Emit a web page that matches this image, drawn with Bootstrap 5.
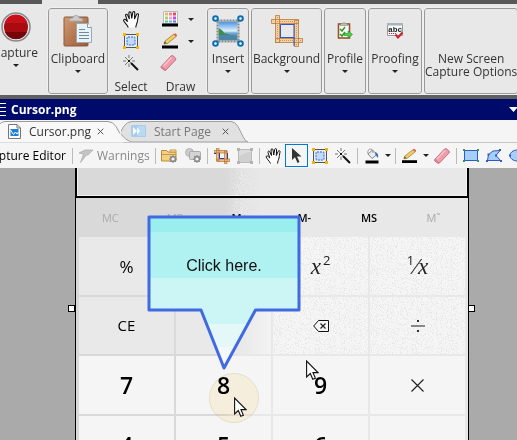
<!DOCTYPE html>
<html lang="en">
<head>
<meta charset="utf-8">
<meta name="viewport" content="width=device-width, initial-scale=1">
<title>Cursor.png - Capture Editor</title>
<link href="https://cdn.jsdelivr.net/npm/bootstrap@5.3.0/dist/css/bootstrap.min.css" rel="stylesheet">
<style>
body{font-family:"Open Sans","Noto Sans",sans-serif;font-size:12px;line-height:13px;color:#333;background:#aaa;height:100vh}
button{font:inherit;color:inherit;background:none;border:0;padding:0}
svg{display:block;flex:none}
.ribbon{background:#e8e8e8;border-top:4px solid #585858;border-bottom:4px solid #606060;height:99px;padding:4px 0 1px}
.ribbon-top{top:-4px;height:4px;left:42px;width:56px;background:#e8e8e8}
.rb{white-space:nowrap;flex:none;font-size:12px}
.rb-box{border:1px solid #999;border-radius:3px;outline:1px solid #f0f0f0}
.rb-icon{height:43px}
.rb-icon-cap{height:38px}
.rb .caret{margin-top:5px}
.rule{width:1px;background:#c4c4c4;margin:5px 2px 5px 0}
.w-cap{width:31px;margin-right:15px}
.w-clip{width:60px}.w-sel{width:42px}.w-draw{width:53px}.w-ins{width:42px}
.w-bg{width:71px}.w-prof{width:42px}.w-proof{width:54px}
.w-new{flex:1 0 93px}
.rb-group{gap:2px}
.tool-row{height:22px}
.tool-name{margin-top:6px}
.caret{width:0;height:0;border:3px solid transparent;border-top-color:#222;border-bottom:0}
.titlebar{background:#000a6b;color:#fff;height:21px;font-weight:700}
.tabs{height:23px;background:#f5f5f5;border-bottom:1px solid #c3c5c8}
.tab{height:22px}
.tab-a{width:121px;padding-left:8px;z-index:2}
.tab-b{width:127px;padding-left:10px;color:#777;z-index:1}
.tab-shape{left:0;top:0;z-index:-1}
.tab-name{width:68px}
.toolbar{background:#f5f5f5;height:25px}
.tb{width:23px;height:23px}
.tb.picked{border:1px solid #0078d7}
.tb-rule{width:1px;height:16px;background:#bbb;margin:0 2px 0 3px;flex:none}
.tb-drop{width:9px;height:23px}
.tb-label{width:69px;color:#000;padding-right:3px}
.tb-warn{width:77px;color:#888}
.stage{background:#aaa;padding:0 48px 0 75px;min-height:0}
.calc{border:solid #000;border-width:0 1px;background:linear-gradient(90deg,#d9d9d9 38%,#e8e8e8 42%)}
.readout{height:30px;border:solid #000;border-width:0 1px 2px}
.readout-in{border:solid #f0f0f0;border-width:0 1px 1px}
.mem{grid-template-columns:repeat(6,1fr);height:39px;padding:0 2px;font-size:11px;font-weight:600;color:#000}
.mem button:disabled{color:#aaa;font-weight:400}
.keys{grid-template-columns:repeat(4,1fr);grid-template-rows:58px 57px 58px 58px;gap:2px;padding:0 3px}
.key{background:#f5f5f5;color:#000;position:relative}
.key.dim{background:#e9e9e9}
.key.fade-cell{background:linear-gradient(90deg,#e9e9e9 70%,#f3f3f3)}
.fn{font-size:15px}
.pct{font-size:17px}
.digit{font-size:23px;font-weight:600}
.math{font-family:"Liberation Serif",serif;font-style:italic;font-size:23px;color:#222}
.math sup{font-family:"Open Sans",sans-serif;font-style:normal;font-size:13px;top:-9px;margin-left:2px}
.grain{inset:0;width:100%;height:100%}
.grain-top{left:0;top:0;width:100%;height:188px}
.callout{left:70px;top:46px;width:156px;height:160px}
.callout p{font-family:"Liberation Sans",Arial,sans-serif;font-size:16px;line-height:20px;color:#111;padding-top:42px}
.halo{left:133px;top:205px;mix-blend-mode:multiply}
.ptr-a{left:158px;top:229px}
.ptr-b{left:230px;top:192px}
.grip{width:7px;height:7px;border:1px solid #000;background:#fff;top:137px}
.grip-l{left:-8px}.grip-r{right:-7px}
</style>
<script src="https://cdn.jsdelivr.net/npm/bootstrap@5.3.0/dist/js/bootstrap.bundle.min.js"></script>
</head>
<body class="d-flex flex-column overflow-hidden">

<svg width="0" height="0" class="position-absolute" aria-hidden="true">
  <defs>
    <symbol id="hand" viewBox="0 0 16 16"><path d="M5 15.500C4 13 1 10.500 .6 9c-.2-1.200 1.200-1.500 2-.6L4.300 10 2.500 4.500c-.4-1.500 1.200-2 1.800-.6L6 7.500 5.500 2c0-1.600 1.900-1.600 2.100 0L8.200 7l1-5.500c.3-1.500 2-1.200 1.900.3L10.800 7.500l1.900-4.200c.7-1.300 2.200-.6 1.800.8C13.800 7 14 8 13.500 10c-.4 1.800-1.200 3-1.500 5.500" fill="#fff" stroke="#111"/></symbol>
    <symbol id="pick" viewBox="0 0 16 16"><rect x="1.500" y="1.500" width="13" height="13" fill="#dff2f5" stroke="#555"/><rect x="4" y="4" width="8" height="8" rx="1" fill="#c4d9fa" stroke="#3c5fd0" stroke-dasharray="2 1"/><path d="M0 0h3v3H0zM13 0h3v3h-3zM0 13h3v3H0zM13 13h3v3h-3z" fill="#f9b208"/></symbol>
    <symbol id="wand" viewBox="0 0 16 16"><path d="M6 0v3M6 8.500V12M0 6h3M9 6h3M2 2l2 2M10 2 8 4M2 10l2-2" stroke="#777"/><path d="m4.500 4.500 3 3m0-3-3 3" stroke="#111"/><path d="m8 8 7 7" stroke="#111" stroke-width="2"/></symbol>
    <symbol id="pencil" viewBox="0 0 16 16"><path d="M0 12.500h16v3H0z" fill="#000"/><path d="m2 11 1-3 9-7 2.500 2.200L5.500 10.500z" fill="#f0d060" stroke="#9b7a2c" stroke-width=".8"/><path d="m2 11 1-2.500 1.500 1.600z" fill="#444"/><path d="m11.500 1.500 1.700-1.300 2 1.800-1.500 1.500z" fill="#e45a5a"/></symbol>
    <symbol id="eraser" viewBox="0 0 16 16"><path d="M.7 11.500 10.500 1Q11.500.2 12.700 1L15 3q.8 1 0 2L5.500 15q-1 .8-2 0L.8 13q-.6-.8-.1-1.500z" fill="#f19bab" stroke="#b96b7b" stroke-width=".9"/><path d="m1 11.500 4 3.500" stroke="#cf7485"/><path d="m3 11 8-8.500" stroke="#f9c3cd" stroke-width="1.500"/></symbol>
    <symbol id="crop" viewBox="0 0 32 32"><path d="M.5 4.500h27v4H.5zM4.500 23.500h27v4h-27zM23.500 5.500h4v26h-4zM4.500.5h4v27h-4z" fill="#f5cf9c" stroke="#b87a3d" stroke-width=".8"/><path d="M6.500 2v24M25.500 7v23M9 6.500h14M9 25.500h21" stroke="#c49a67" stroke-dasharray="1 1"/><path d="M9.500 23V9.500H23M9 22.500h14M23 9v22" fill="none" stroke="#3554c8"/></symbol>
    <symbol id="crop-s" viewBox="0 0 16 16"><path d="M0 2.500h13v2.500H0zM3 11h13v2.500H3zM10.500 3H13v12.500h-2.500zM2.500 0H5v13H2.500z" fill="#f3bd7c" stroke="#a9642c" stroke-width=".6"/><path d="M5.500 5v5.500H10M13.500 5v6M0 5.500h2" fill="none" stroke="#263cc0"/></symbol>
    <symbol id="ptr" viewBox="0 0 13 20"><path d="M.6 1v16l3.700-3.500 2.500 5.800 2.600-1.100L7 12.600h5z" fill="#fff" stroke="#111" stroke-width="1.100"/></symbol>
    <symbol id="gear" viewBox="0 0 8 8"><circle cx="4" cy="4" r="2.500" fill="#eee" stroke="#888" stroke-width="1.200"/><path d="M4 0v8M0 4h8M1.200 1.200l5.600 5.600M6.800 1.200 1.200 6.800" stroke="#888" stroke-width="1.100"/><circle cx="4" cy="4" r="1.500" fill="#f5f5f5"/></symbol>
    <filter id="speck" x="0" y="0" width="100%" height="100%" color-interpolation-filters="sRGB">
      <feTurbulence type="fractalNoise" baseFrequency=".8" numOctaves="2" seed="4"/>
      <feColorMatrix values="0 0 0 0 .91  0 0 0 0 .91  0 0 0 0 .91  14 0 0 0 -7.800"/>
    </filter>
    <filter id="speck-dark" x="0" y="0" width="100%" height="100%" color-interpolation-filters="sRGB">
      <feTurbulence type="fractalNoise" baseFrequency=".8" numOctaves="2" seed="9"/>
      <feColorMatrix values="0 0 0 0 .85  0 0 0 0 .85  0 0 0 0 .85  14 0 0 0 -7"/>
    </filter>
  </defs>
</svg>

<header class="ribbon d-flex position-relative flex-shrink-0">
  <div class="ribbon-top position-absolute"></div>
  <button class="rb w-cap d-flex flex-column align-items-center">
    <span class="rb-icon-cap d-flex align-items-center"><svg width="30" height="30" viewBox="0 0 30 30"><circle cx="15" cy="15" r="14" fill="#e6ebf4" stroke="#888" stroke-width="1.500"/><circle cx="15" cy="15" r="12" fill="#a80c10"/><path d="M3.500 11a12 12 0 0 1 23 0z" fill="#c8101a"/><path d="M4 20a12 12 0 0 0 22 0z" fill="#760407"/></svg></span>
    <span>Capture</span><i class="caret"></i>
  </button>
  <div class="rule"></div>
  <button class="rb rb-box w-clip d-flex flex-column align-items-center">
    <span class="rb-icon d-flex align-items-center"><svg width="30" height="32" viewBox="0 0 30 32"><defs><linearGradient id="board" x2="1" y2="1"><stop stop-color="#d39a72"/><stop offset="1" stop-color="#9a5a35"/></linearGradient></defs><rect x="1" y="2" width="24" height="29" rx="1" fill="url(#board)" stroke="#8a5b40"/><path d="M6 6q0-3 4-3 0-2.500 3-2.500T16 3q4 0 4 3z" fill="#c8ccd0" stroke="#aaa"/><path d="M13.500 8.500h11l4 4v15h-15z" fill="#e6f4f8" stroke="#9ab"/><path d="M24.500 8.500v4h4" fill="#fff" stroke="#89a"/><path d="M16 14.500h6M16 17.500h10M16 20.500h10M16 23.500h10" stroke="#789"/></svg></span>
    <span>Clipboard</span><i class="caret"></i>
  </button>
  <div class="rb w-sel text-center ps-1">
    <button class="tool-row d-flex w-100 align-items-center justify-content-center" aria-label="Pan"><svg width="17" height="17"><use href="#hand"/></svg></button>
    <button class="tool-row d-flex w-100 align-items-center justify-content-center" aria-label="Select area"><svg width="16" height="16"><use href="#pick"/></svg></button>
    <button class="tool-row d-flex w-100 align-items-center justify-content-center" aria-label="Magic wand"><svg width="16" height="16"><use href="#wand"/></svg></button>
    <div class="tool-name">Select</div>
  </div>
  <div class="rule"></div>
  <div class="rb w-draw text-center">
    <button class="tool-row d-flex w-100 align-items-center" aria-label="Color"><svg class="ms-2 me-2" width="20" height="16" viewBox="0 0 20 16"><path d="M3.500.5h14v12h-14z" fill="#fff" stroke="#bbb"/><path d="M5 1.500h3v3H5z" fill="#e7b865"/><path d="M9 1.500h3v3H9z" fill="#f08a8a"/><path d="M13 1.500h3v3h-3z" fill="#f04070"/><path d="M5 5.500h3v3H5z" fill="#a3d65c"/><path d="M9 5.500h3v3H9z" fill="#f4a0d0"/><path d="M13 5.500h3v3h-3z" fill="#c050e0"/><path d="M5 9.500h3v2H5z" fill="#50c8a8"/><path d="M9 9.500h3v2H9z" fill="#60b0f0"/><path d="M13 9.500h3v2h-3z" fill="#6070e8"/><path d="M2 12.500h16v3H2z"/></svg><i class="caret mt-0"></i></button>
    <button class="tool-row d-flex w-100 align-items-center" aria-label="Pencil"><svg class="ms-2 me-2" width="20" height="16"><use href="#pencil" x="2" width="16" height="16"/></svg><i class="caret mt-0"></i></button>
    <button class="tool-row d-flex w-100 align-items-center" aria-label="Eraser"><svg class="ms-2" width="17" height="16"><use href="#eraser"/></svg></button>
    <div class="tool-name ps-1">Draw</div>
  </div>
  <div class="rule"></div>
  <div class="rb-group d-flex flex-grow-1">
  <button class="rb rb-box w-ins d-flex flex-column align-items-center">
    <span class="rb-icon d-flex align-items-center"><svg width="32" height="32" viewBox="0 0 32 32"><defs><linearGradient id="sea" x2="0" y2="1"><stop stop-color="#3c8ce0"/><stop offset=".5" stop-color="#e0f2fc"/><stop offset=".6" stop-color="#6fa8d0"/><stop offset="1" stop-color="#2b6a9c"/></linearGradient></defs><rect x="6" y="6" width="20" height="20" fill="url(#sea)"/><path d="M6 13q5 2 6 5l10 3H6z" fill="#3c8d4a"/><path d="M6 20q10-1 20 1v5H6z" fill="#4b86a8"/><rect x="5.500" y="5.500" width="21" height="21" fill="none" stroke="#e8e8e8" stroke-width="2"/><rect x="5.500" y="5.500" width="21" height="21" fill="none" stroke="#888" stroke-width="2" stroke-dasharray="2 1"/><g fill="#fff" stroke="#0a6fae" stroke-width="2"><circle cx="3.500" cy="3.500" r="2.300"/><circle cx="28.500" cy="3.500" r="2.300"/><circle cx="3.500" cy="28.500" r="2.300"/><circle cx="28.500" cy="28.500" r="2.300"/></g></svg></span>
    <span>Insert</span><i class="caret"></i>
  </button>
  <button class="rb rb-box w-bg d-flex flex-column align-items-center">
    <span class="rb-icon d-flex align-items-center"><svg width="32" height="32"><use href="#crop"/></svg></span>
    <span>Background</span><i class="caret"></i>
  </button>
  <button class="rb rb-box w-prof d-flex flex-column align-items-center">
    <span class="rb-icon d-flex align-items-center"><svg width="16" height="17" viewBox="0 0 16 17"><rect x="1.500" y="2" width="11" height="14" fill="#fff" stroke="#995128" stroke-width="1.600"/><path d="M3 3.500 4 1.500h2q1-2 2 0h2l1 2z" fill="#bbb" stroke="#888" stroke-width=".6"/><path d="m3 7 2 2 3-4M3 12l2 2 3-4" fill="none" stroke="#20a020" stroke-width="1.500"/><path d="M7 11.500h4V9l4.500 3.500L11 16v-2.500H7z" fill="#4fd04f" stroke="#168a16" stroke-width=".6"/></svg></span>
    <span>Profile</span><i class="caret"></i>
  </button>
  <button class="rb rb-box w-proof d-flex flex-column align-items-center">
    <span class="rb-icon d-flex align-items-center"><svg width="18" height="17" viewBox="0 0 18 17"><path d="M1.500 1.500h15v12h-15z" fill="#f4fafb" stroke="#999"/><path d="M1 1h16v2.500H1z" fill="#aab4b8"/><text x="2" y="9.500" font-family="Liberation Mono,monospace" font-weight="700" font-size="8" fill="#222">abc</text><path d="M3 11.500h8" stroke="#d22" stroke-dasharray="1 1"/><path d="m9.500 12.500 2.500 3 4.500-5" fill="none" stroke="#cf2430" stroke-width="2"/></svg></span>
    <span>Proofing</span><i class="caret"></i>
  </button>
  <button class="rb rb-box w-new d-flex flex-column align-items-center">
    <span class="rb-icon"></span>
    <span>New Screen</span>
    <span>Capture Options</span>
  </button>
  </div>
</header>

<div class="titlebar d-flex align-items-center flex-shrink-0">
  <svg width="11" height="15" viewBox="0 0 11 15"><path d="M0 1.500h6M0 5.500h6M0 9.500h6M0 13.500h6" stroke="#fff"/></svg>
  <span>Cursor.png</span>
  <svg class="ms-auto" width="8" height="5" viewBox="0 0 8 5"><path d="M0 0h9L4.500 5z" fill="#fff"/></svg>
</div>

<nav class="tabs d-flex flex-shrink-0" aria-label="Documents">
  <div class="tab tab-a d-flex align-items-center position-relative">
    <svg class="tab-shape position-absolute" width="130" height="23" viewBox="0 0 130 23"><path d="M-1 5Q1 1.500 5 1.500h103q5 0 8 5l4 7Q117 18 124 22.500H-1z" fill="#f8f8f8"/><path d="M-1 5Q1 1.500 5 1.500h103q5 0 8 5l4 7" fill="none" stroke="#999"/></svg>
    <svg width="13" height="15" viewBox="0 0 13 15"><path d="M.5.5h8.500l3.500 3.500v10.500H.5z" fill="#fff" stroke="#777"/><path d="M9 .5V4h3.500" fill="none" stroke="#777"/><path d="M2.500 5h8v7h-8z" fill="#1f7fd8"/><path d="m2.500 6 3 4.500 2-2.500 1.500 2 1.500-2" fill="none" stroke="#fff"/></svg>
    <a href="#" class="tab-name text-reset text-decoration-none ms-2 text-nowrap">Cursor.png</a>
    <button aria-label="Close Cursor.png"><svg width="7" height="7" viewBox="0 0 7 7"><path d="m.7.7 5.600 5.600m0-5.600L.7 6.300" stroke="#555"/></svg></button>
  </div>
  <div class="tab tab-b d-flex align-items-center position-relative">
    <svg class="tab-shape position-absolute" width="127" height="22" viewBox="0 0 127 22"><path d="M-1 13 3 6q3-4.500 8-4.500h99q4 0 7 5l5 10q2 5 5 5.500H10Q4 20-1 13z" fill="#e1e1e1" stroke="#a0a0a0"/></svg>
    <svg width="15" height="12" viewBox="0 0 15 12"><rect width="15" height="12" rx="1" fill="#a8cdea"/><path d="M7 1h7v10H7z" fill="#b9daf2"/><path d="m2 2 4 4-4 4zM6 2l3 4-3 4z" fill="#f5fbff"/></svg>
    <a href="#" class="tab-name text-reset text-decoration-none text-nowrap ms-2">Start Page</a>
    <button aria-label="Close Start Page"><svg width="7" height="7" viewBox="0 0 7 7"><path d="m.7.7 5.600 5.600m0-5.600L.7 6.300" stroke="#555"/></svg></button>
  </div>
</nav>

<div class="toolbar d-flex align-items-center flex-shrink-0" role="toolbar" aria-label="Editor tools">
  <div class="tb-label d-flex justify-content-end text-nowrap flex-shrink-0">Capture Editor</div>
  <i class="tb-rule"></i>
  <button class="tb-warn d-flex align-items-center flex-shrink-0"><svg class="me-1 ms-1" width="14" height="14" viewBox="0 0 14 14"><path d="M0 4 6 1h8L9 6H7.500L1.500 13.500 4.500 5z" fill="#c4c4c4" stroke="#aaa" stroke-width=".7"/></svg>Warnings</button>
  <i class="tb-rule"></i>
  <button class="tb d-flex align-items-center justify-content-center flex-shrink-0" aria-label="Folder options"><svg width="17" height="16" viewBox="0 0 17 16"><path d="M.5 2.500h5l1.500 1.500h8v9H.5z" fill="#f4cf80" stroke="#bc8a38"/><path d="M1 6.500h14M9 2h6v2H9z" stroke="#c59a4e" fill="#fae5b0"/><use href="#gear" x="8" y="7" width="8" height="8"/></svg></button>
  <button class="tb d-flex align-items-center justify-content-center flex-shrink-0" aria-label="Shape options"><svg width="16" height="16" viewBox="0 0 16 16"><circle cx="4.500" cy="4.500" r="4" fill="#ccc" stroke="#b5b5b5"/><rect x="4.500" y="3.500" width="11" height="8" rx="1" fill="#d3d3d3" stroke="#aaa"/><use href="#gear" x="8" y="7" width="8" height="8"/></svg></button>
  <i class="tb-rule"></i>
  <button class="tb d-flex align-items-center justify-content-center flex-shrink-0" aria-label="Crop"><svg width="16" height="16"><use href="#crop-s"/></svg></button>
  <button class="tb d-flex align-items-center justify-content-center flex-shrink-0" aria-label="Resize"><svg width="16" height="16" viewBox="0 0 16 16"><path d="M1.500 1.500h13v13h-13z" fill="#dcdcdc" stroke="#bbb"/><path d="M2 9q6-5 12-5v10H2z" fill="#d0d0d0"/><path d="M0 0h3v3H0zM13 0h3v3h-3zM0 13h3v3H0zM13 13h3v3h-3z" fill="#b4b4b4"/></svg></button>
  <i class="tb-rule"></i>
  <button class="tb d-flex align-items-center justify-content-center flex-shrink-0" aria-label="Pan"><svg width="17" height="16"><use href="#hand"/></svg></button>
  <button class="tb picked d-flex align-items-center justify-content-center flex-shrink-0" aria-label="Pointer" aria-pressed="true"><svg width="10" height="15" viewBox="0 0 10 15"><path d="M0 0v12l3-2.800L5.500 15l2-1L5 8.500h4.500z" fill="#333"/></svg></button>
  <button class="tb d-flex align-items-center justify-content-center flex-shrink-0" aria-label="Select area"><svg width="16" height="16"><use href="#pick"/></svg></button>
  <button class="tb d-flex align-items-center justify-content-center flex-shrink-0" aria-label="Magic wand"><svg width="16" height="16"><use href="#wand"/></svg></button>
  <i class="tb-rule"></i>
  <button class="tb d-flex align-items-center justify-content-center flex-shrink-0" aria-label="Fill"><svg width="14" height="16" viewBox="0 0 14 16"><path d="M.5 12.500h13v3H.5z"/><path d="m3 6 4.500-4L12 6.500 7 10.500z" fill="#e9edf0" stroke="#888"/><path d="M3 6q-1-5 3-5 2 0 2 4" fill="none" stroke="#999"/><path d="M10 4q4 1 3 6l-2.500-3z" fill="#3b6cb5"/></svg></button>
  <button class="tb-drop d-flex align-items-center justify-content-center flex-shrink-0" aria-label="Fill choices"><i class="caret"></i></button>
  <i class="tb-rule"></i>
  <button class="tb d-flex align-items-center justify-content-center flex-shrink-0" aria-label="Pencil"><svg width="15" height="16"><use href="#pencil"/></svg></button>
  <button class="tb-drop d-flex align-items-center justify-content-center flex-shrink-0" aria-label="Pencil choices"><i class="caret"></i></button>
  <button class="tb d-flex align-items-center justify-content-center flex-shrink-0" aria-label="Eraser"><svg width="16" height="16"><use href="#eraser"/></svg></button>
  <i class="tb-rule"></i>
  <button class="tb d-flex align-items-center justify-content-center flex-shrink-0" aria-label="Rectangle"><svg width="16" height="13" viewBox="0 0 16 13"><path d="M1.500 1.500h13v10h-13z" fill="#a4d0f8" stroke="#3157c8"/><path d="M0 0h2v2H0zM14 0h2v2h-2zM0 11h2v2H0zM14 11h2v2h-2z" fill="#2a9a50"/></svg></button>
  <button class="tb d-flex align-items-center justify-content-center flex-shrink-0" aria-label="Polygon"><svg width="16" height="13" viewBox="0 0 16 13"><path d="m1.500 11.500 1-6L7 2l7-.5-4 5 4.500 5z" fill="#a4d0f8" stroke="#3157c8"/><path d="M0 11h2v2H0zM13 0h2v2h-2zM14 11h2v2h-2zM1.500 4.500h2v2h-2zM9 5.500h2v2H9z" fill="#3157c8"/></svg></button>
  <button class="tb d-flex align-items-center justify-content-center flex-shrink-0" aria-label="Ellipse"><svg width="16" height="13" viewBox="0 0 16 13"><ellipse cx="8" cy="6.500" rx="7" ry="5.500" fill="#a4d0f8" stroke="#3157c8"/><path d="M0 5.500h2v2H0z" fill="#3157c8"/></svg></button>
</div>

<main class="stage d-flex flex-grow-1 overflow-hidden">
  <div class="calc flex-grow-1 position-relative">
    <svg class="grain-top position-absolute" aria-hidden="true"><defs><linearGradient id="band"><stop offset=".36" stop-color="#000"/><stop offset=".39" stop-color="#fff"/><stop offset=".4" stop-color="#fff"/><stop offset=".47" stop-color="#000"/></linearGradient><mask id="band-mask"><rect width="100%" height="100%" fill="url(#band)"/></mask></defs><rect width="100%" height="69" filter="url(#speck-dark)" mask="url(#band-mask)"/></svg>
    <div class="readout d-flex position-relative"><div class="readout-in flex-grow-1"></div></div>
    <div class="mem d-grid position-relative">
      <button disabled>MC</button><button disabled>MR</button><button>M+</button><button>M-</button><button>MS</button><button disabled>Mˇ</button>
    </div>
    <div class="keys d-grid">
      <button class="key dim pct">%</button>
      <button class="key dim" aria-label="Square root"></button>
      <button class="key math"><svg class="grain position-absolute" aria-hidden="true"><rect width="100%" height="100%" filter="url(#speck)"/></svg><span class="position-relative">x<sup>2</sup></span></button>
      <button class="key math"><svg class="grain position-absolute" aria-hidden="true"><rect width="100%" height="100%" filter="url(#speck)"/></svg><span class="position-relative"><sup class="ms-0">1</sup>⁄x</span></button>
      <button class="key dim fn">CE</button>
      <button class="key fade-cell" aria-label="Clear"></button>
      <button class="key d-flex align-items-center justify-content-center" aria-label="Backspace"><svg class="grain position-absolute" aria-hidden="true"><rect width="100%" height="100%" filter="url(#speck)"/></svg><svg class="position-relative" width="16" height="12" viewBox="0 0 16 12"><path d="M5.500.5h10v11h-10L.7 6z" fill="#f5f5f5" stroke="#111"/><path d="m7.500 3.500 5 5m0-5-5 5" stroke="#222" stroke-width="1.200"/></svg></button>
      <button class="key d-flex align-items-center justify-content-center" aria-label="Divide"><svg class="grain position-absolute" aria-hidden="true"><rect width="100%" height="100%" filter="url(#speck)"/></svg><svg class="position-relative" width="14" height="12" viewBox="0 0 14 12"><path d="M0 6h14" stroke="#888" stroke-width="2"/><path d="M6 0h2v2H6zM6 10h2v2H6z" fill="#333"/></svg></button>
      <button class="key digit">7</button>
      <button class="key digit">8</button>
      <button class="key digit">9</button>
      <button class="key d-flex align-items-center justify-content-center" aria-label="Multiply"><svg width="13" height="13" viewBox="0 0 13 13"><path d="m.5.5 12 12m0-12-12 12" stroke="#222" stroke-width="1.200"/></svg></button>
      <button class="key digit">4</button>
      <button class="key digit">5</button>
      <button class="key digit">6</button>
      <button class="key" aria-label="Subtract"></button>
    </div>
    <svg class="ptr-b position-absolute" width="13" height="20"><use href="#ptr"/></svg>
    <svg class="halo position-absolute" width="50" height="50" viewBox="0 0 50 50"><circle cx="25" cy="25" r="24.500" fill="#fff8e6" stroke="#efe8d6"/></svg>
    <svg class="ptr-a position-absolute" width="13" height="20"><use href="#ptr"/></svg>
    <div class="callout position-absolute text-center">
      <svg class="position-absolute top-0 start-0" width="156" height="160" viewBox="0 0 156 160"><defs><linearGradient id="aqua" gradientUnits="userSpaceOnUse" x1="0" y1="0" x2="0" y2="160"><stop offset=".11" stop-color="#9aeeee"/><stop offset=".11" stop-color="#b0f1f1"/><stop offset=".4" stop-color="#b0f1f1"/><stop offset=".4" stop-color="#ccf6f5"/><stop offset=".69" stop-color="#ccf6f5"/><stop offset=".69" stop-color="#e5f8f8"/><stop offset=".83" stop-color="#e5f8f8"/><stop offset=".83" stop-color="#f3f9f9"/></linearGradient></defs><path d="M3 3h150v93h-43.500L78 154 55 96H3z" fill="url(#aqua)" stroke="#4169e1" stroke-width="3" stroke-linejoin="round"/></svg>
      <p class="position-relative m-0">Click here.</p>
    </div>
    <i class="grip grip-l position-absolute"></i>
    <i class="grip grip-r position-absolute"></i>
  </div>
</main>
</body>
</html>
